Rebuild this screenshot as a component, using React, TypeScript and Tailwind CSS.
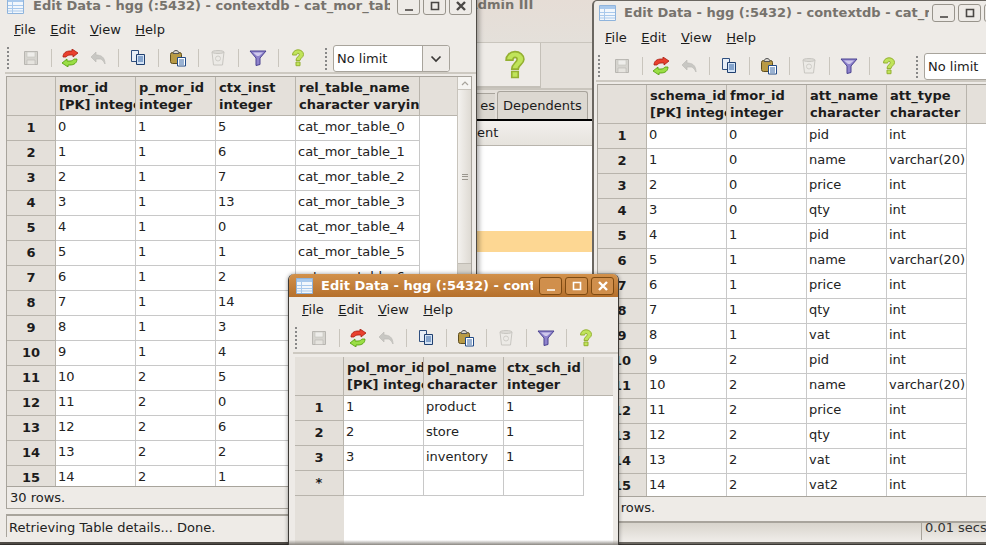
const font = 'font-["DejaVu_Sans",sans-serif]'

function Icon({ kind }: { kind: string }) {
  if (kind === 'save') {
    return (
      <svg width="16" height="16" viewBox="0 0 16 16">
        <path d="M1.500 1.500h13v13h-13z" fill="#d6d4cf" stroke="#b8b6b1" />
        <path d="M4 2h8v5H4z" fill="#eeedea" stroke="#c4c2bd" strokeWidth=".6" />
        <path d="M4 10h8v4.500H4z" fill="#e6e4df" stroke="#b8b6b1" strokeWidth=".6" />
      </svg>
    )
  }
  if (kind === 'refresh') {
    return (
      <svg width="18" height="18" viewBox="0 0 18 18">
        <path d="M2 8C2 4 5 2 9 2h2V0l6 4-5 4V6H9C7 6 6 7 5 8z" fill="#e9402e" stroke="#a61c10" strokeWidth=".8" />
        <path d="M16 10c0 4-3 6-7 6H7v2l-6-4 5-4v2h3c2 0 3-1 4-2z" fill="#9ade45" stroke="#4e9a06" strokeWidth=".8" />
      </svg>
    )
  }
  if (kind === 'undo') {
    return (
      <svg width="16" height="16" viewBox="0 0 16 16">
        <path d="M1 7l5-5v3c5 0 9 2 9 9-2-4-4-5-5-5H6v3z" fill="#c8c7c3" stroke="#bdbcb8" strokeWidth=".7" />
      </svg>
    )
  }
  if (kind === 'copy') {
    return (
      <svg width="16" height="17" viewBox="0 0 16 17">
        <path d="M1.500 1.500h7v11h-7z" fill="#e8eef6" stroke="#2f4f7f" />
        <path d="M6.500 5.500h8v10h-8z" fill="#d4e3f5" stroke="#1f3f6f" />
        <path d="M8 8h5M8 10h5M8 12h5" stroke="#3465a4" />
      </svg>
    )
  }
  if (kind === 'paste') {
    return (
      <svg width="18" height="18" viewBox="0 0 18 18">
        <rect x="1.500" y="3.500" width="11" height="11" rx="2" fill="#b89a45" stroke="#5f4e1e" />
        <path d="M4 4.500c0-2 1.500-3 3-3s3 1 3 3z" fill="#d8d6d0" stroke="#555" />
        <path d="M8.500 8.500h8v8.500h-8z" fill="#fff" stroke="#204a87" />
        <path d="M10 11h5M10 13h5M10 15h5" stroke="#3465a4" />
      </svg>
    )
  }
  if (kind === 'trash') {
    return (
      <svg width="16" height="17" viewBox="0 0 16 17">
        <path d="M2 3h12l-1.500 13h-9z" fill="#eceae6" stroke="#c8c6c1" />
        <ellipse cx="8" cy="3" rx="6" ry="1.500" fill="#dddbd6" stroke="#c8c6c1" />
        <circle cx="8" cy="9.500" r="2.500" fill="none" stroke="#cfcdc8" />
      </svg>
    )
  }
  if (kind === 'filter') {
    return (
      <svg width="18" height="16" viewBox="0 0 18 16">
        <path d="M1 1h16l-6 7v6.500l-4 1V8z" fill="#8e82cc" stroke="#4a4290" />
        <path d="M4 2.500h10L10 6H8z" fill="#cfc9ec" />
      </svg>
    )
  }
  return <HelpMark width={16} height={18} />
}

function HelpMark({ width, height }: { width: number; height: number }) {
  return (
    <svg width={width} height={height} viewBox="0 0 16 18">
      <path d="M2.500 6C2.500 3 5 .8 8 .8s5.500 2 5.500 4.700c0 3-3.500 3.500-3.500 6H6c0-3.500 3.300-4 3.300-6 0-.8-.5-1.200-1.300-1.200s-1.300.6-1.300 1.700z" fill="#c0e45a" stroke="#94b032" />
      <path d="M6 13h4v3.700H6z" fill="#c0e45a" stroke="#94b032" />
    </svg>
  )
}

function Sep() {
  return <div className="w-px h-[18px] bg-[#c9c5bd] ml-[10px] mr-[9px]" />
}

function Grip() {
  return <div className="w-[5px] h-[22px] border-l-2 border-dotted border-[#888]" />
}

function Toolbar() {
  return (
    <div className="flex items-center h-[31px] shrink-0 bg-[#eeebe7] border-b-2 border-[#cdc9c1]">
      <div className="ml-[2px] mr-[9px]"><Grip /></div>
      <div className="w-[20px] flex justify-center"><Icon kind="save" /></div>
      <Sep />
      <div className="w-[20px] -ml-[1px] flex justify-center"><Icon kind="refresh" /></div>
      <div className="w-[20px] ml-[8px] flex justify-center"><Icon kind="undo" /></div>
      <Sep />
      <div className="w-[20px] flex justify-center"><Icon kind="copy" /></div>
      <Sep />
      <div className="w-[20px] flex justify-center"><Icon kind="paste" /></div>
      <Sep />
      <div className="w-[20px] flex justify-center"><Icon kind="trash" /></div>
      <Sep />
      <div className="w-[20px] flex justify-center"><Icon kind="filter" /></div>
      <Sep />
      <div className="w-[20px] flex justify-center"><Icon kind="help" /></div>
    </div>
  )
}

function Combo() {
  return (
    <div className="flex-1 h-[31px] pt-[2px] flex items-center bg-[#eeebe7] border-b-2 border-[#cdc9c1]">
      <div className="ml-[4px] mr-[3px]"><Grip /></div>
      <div className="w-[117px] h-[27px] shrink-0 flex bg-white border border-[#a8a49c] rounded-[3px] text-[13px] text-[#1c1c1c]">
        <div className="w-[88px] pl-[3px] leading-[25px]">No limit</div>
        <div className="flex-1 bg-[#eeebe7] border-l border-[#a8a49c] rounded-r-[3px] flex items-center justify-center">
          <svg width="12" height="8" viewBox="0 0 12 8" fill="none" stroke="#3c3a38" strokeWidth="1.700">
            <path d="M1.500 1.500L6 6l4.500-4.500" />
          </svg>
        </div>
      </div>
    </div>
  )
}

function WinButton({ kind, active }: { kind: string; active?: boolean }) {
  const color = active ? '#fff' : '#4a4744'
  return (
    <div className={active
      ? 'w-[23px] h-[18px] shrink-0 rounded-[3px] border border-[#7d4a12] bg-[#d08f4c] flex items-center justify-center'
      : 'w-[23px] h-[18px] shrink-0 rounded-[3px] border border-[#98948c] bg-[#eeebe7] flex items-center justify-center'}>
      <svg width="12" height="12" viewBox="0 0 12 12" fill="none" stroke={color} strokeWidth={kind === 'close' ? 2.400 : 1.600}>
        {kind === 'min' && <path d="M2 10h8" />}
        {kind === 'max' && <path d="M2.500 2.500h7v7h-7z" />}
        {kind === 'close' && <path d="M2 2l8 8M10 2l-8 8" />}
      </svg>
    </div>
  )
}

function TitleIcon() {
  return (
    <svg width="17" height="16" viewBox="0 0 17 16" className="shrink-0">
      <path d="M.500.500h16v15H.500z" fill="#f2f7fc" stroke="#8fb4dc" />
      <path d="M1 1h15v3H1z" fill="#a9c9ec" />
      <path d="M5.500 1v14M1 7.500h15M1 10.500h15M1 13h15" stroke="#a9c9ec" />
    </svg>
  )
}

function Menu({ className }: { className: string }) {
  return (
    <div className={`flex items-center h-[26px] shrink-0 gap-[14.500px] text-[13px] text-[#1c1c1c] bg-[#eeebe7] ${className}`}>
      <span><u>F</u>ile</span>
      <span><u>E</u>dit</span>
      <span><u>V</u>iew</span>
      <span><u>H</u>elp</span>
    </div>
  )
}

type TableProps = {
  cols: { w: number; a: string; b: string }[]
  rows: (string | number)[][]
}

function Table({ cols, rows }: TableProps) {
  return (
    <div className="flex-1 min-w-0 overflow-hidden bg-white">
      <div className="flex h-[39px] bg-[#e4e0da] border-b border-[#b8b4ac]">
        <div className="w-[49px] shrink-0 border-r border-[#b8b4ac]" />
        {cols.map((c) => (
          <div key={c.a} style={{ width: c.w }} className="shrink-0 pl-[3px] pt-[2px] overflow-hidden whitespace-nowrap border-r border-[#b8b4ac] font-bold text-[13px] leading-[17px] text-[#1c1c1c]">
            <div>{c.a}</div>
            <div>{c.b}</div>
          </div>
        ))}
      </div>
      {rows.map((r, i) => (
        <div key={i} className="flex h-[25px]">
          <div className="w-[49px] shrink-0 bg-[#e4e0da] border-r border-b border-[#b8b4ac] flex items-center justify-center font-bold text-[13px] text-[#1c1c1c]">
            {r[0]}
          </div>
          {cols.map((c, j) => (
            <div key={c.a} style={{ width: c.w }} className="shrink-0 pl-[2px] leading-[22px] border-r border-b border-[#c8c8c8] text-[13px] text-[#222] whitespace-nowrap overflow-hidden">
              {r[j + 1]}
            </div>
          ))}
        </div>
      ))}
    </div>
  )
}

function Scrollbar() {
  return (
    <div className="w-[14px] shrink-0 flex flex-col bg-[#d8d4cc] border-l border-[#c8c4bc]">
      <div className="h-[13px] shrink-0 bg-[#f6f5f2] border-b border-[#c8c4bc] flex items-center justify-center">
        <svg width="8" height="5" viewBox="0 0 8 5" fill="none" stroke="#a8a49c" strokeWidth="1.200">
          <path d="M1 4l3-3 3 3" />
        </svg>
      </div>
      <div className="h-[174px] shrink-0 bg-gradient-to-r from-[#f4f2ef] to-[#dedad3] border-b border-[#c0bcb4] flex items-center justify-center">
        <div className="w-[6px] h-[6px] border-y border-[#9a968e] flex items-center">
          <div className="w-full h-px bg-[#9a968e]" />
        </div>
      </div>
    </div>
  )
}

const leftRows = [
  [0, 1, 5], [1, 1, 6], [2, 1, 7], [3, 1, 13], [4, 1, 0], [5, 1, 1], [6, 1, 2], [7, 1, 14],
  [8, 1, 3], [9, 1, 4], [10, 2, 5], [11, 2, 0], [12, 2, 6], [13, 2, 2], [14, 2, 1],
].map((r, i) => [i + 1, r[0], r[1], r[2], i < 8 ? 'cat_mor_table_' + i : ''])

const rightData: [number, string, string][] = [
  [0, 'pid', 'int'], [0, 'name', 'varchar(20)'], [0, 'price', 'int'], [0, 'qty', 'int'],
  [1, 'pid', 'int'], [1, 'name', 'varchar(20)'], [1, 'price', 'int'], [1, 'qty', 'int'], [1, 'vat', 'int'],
  [2, 'pid', 'int'], [2, 'name', 'varchar(20)'], [2, 'price', 'int'], [2, 'qty', 'int'], [2, 'vat', 'int'], [2, 'vat2', 'int'],
]
const rightRows = rightData.map((r, i) => [i + 1, i, r[0], r[1], r[2]])

const midRows = [
  [1, 1, 'product', 1],
  [2, 2, 'store', 1],
  [3, 3, 'inventory', 1],
  ['*', '', '', ''],
]

function Background() {
  return (
    <div className={`absolute left-[440px] top-0 w-[160px] h-[280px] bg-[#e4e0da] flex flex-col text-[13px] text-[#1c1c1c] ${font}`}>
      <div className="h-[43px] shrink-0 pl-[9px] leading-[10px] font-bold text-[#77736d] whitespace-nowrap bg-gradient-to-b from-[#e6ddd6] to-[#e4e0da] border-b border-[#c9c5bd]">pgAdmin III</div>
      <div className="h-[47px] shrink-0 flex border-b-2 border-[#c9c5bd]">
        <div className="w-[64px] ml-[37px] bg-[#eeebe7] border-r border-b-2 border-[#c4c0b8] flex items-center justify-end pr-[12px]">
          <HelpMark width={26} height={30} />
        </div>
      </div>
      <div className="h-[31px] shrink-0 flex items-end pl-[37px] border-b-2 border-black">
        <div className="w-[18px] h-[26px] mr-[2px] text-right leading-[24px] bg-[#dcd8d1] border-t border-[#a8a49c]">es</div>
        <div className="h-[28px] w-[91px] shrink-0 px-[5px] leading-[28px] bg-[#dcd8d1] border border-b-0 border-[#a8a49c] rounded-t-[3px]">Dependents</div>
      </div>
      <div className="h-[25px] shrink-0 bg-gradient-to-b from-[#f2f0ed] to-[#e6e3dd] border-b border-[#b8b4ac] pl-[37px] leading-[24px] overflow-hidden">ent</div>
      <div className="flex-1 bg-white flex flex-col">
        <div className="h-[85px]" />
        <div className="h-[21px] bg-[#fdd793]" />
      </div>
    </div>
  )
}

export default function App() {
  return (
    <div className={`relative w-[986px] h-[545px] overflow-hidden bg-[#3a3733] ${font}`}>
      <Background />

      {/* left window */}
      <div className="absolute left-[-1px] top-[-5px] w-[478px] h-[549px] flex flex-col bg-[#eeebe7] border-x border-b-2 border-[#4f4b46] shadow-[2px_0_5px_rgba(0,0,0,0.35)]">
        <div className="flex items-center h-[22px] shrink-0 pl-[7px] bg-[#eeebe7] text-[13px] font-bold text-[#77736d]">
          <TitleIcon />
          <span className="w-[357px] ml-[9px] mr-[7px] shrink-0 overflow-hidden whitespace-nowrap">Edit Data - hgg (:5432) - contextdb - cat_mor_table_0</span>
          <div className="flex gap-[3px]"><WinButton kind="min" /><WinButton kind="max" /><WinButton kind="close" /></div>
        </div>
        <Menu className="pl-[14px]" />
        <div className="flex shrink-0">
          <div className="w-[316px] shrink-0 ml-[5px]"><Toolbar /></div>
          <Combo />
        </div>
        <div className="flex-1 min-h-0 flex flex-col pl-[6px] pr-[4px] pt-[2px] pb-[5px]">
          <div className="flex-1 min-h-0 flex border border-[#a8a49c]">
            <Table
              rows={leftRows}
              cols={[
                { w: 80, a: 'mor_id', b: '[PK] integer' },
                { w: 80, a: 'p_mor_id', b: 'integer' },
                { w: 80, a: 'ctx_inst', b: 'integer' },
                { w: 124, a: 'rel_table_name', b: 'character varying' },
              ]}
            />
            <Scrollbar />
          </div>
          <div className="h-[22px] shrink-0 border border-t-0 border-[#a8a49c] pl-[3px] text-[13px] leading-[22px] text-[#222]">30 rows.</div>
          <div className="h-[5px] shrink-0" />
          <div className="h-[23px] shrink-0 border-t-2 border-l border-[#a8a49c] pl-[2px] text-[13px] leading-[23px] text-[#222]">Retrieving Table details... Done.</div>
        </div>
      </div>

      {/* right window */}
      <div className="absolute left-[592px] top-0 w-[450px] h-[544px] flex flex-col bg-[#eeebe7] border-l-2 border-t border-b-2 border-[#6b6761] rounded-tl-[5px]">
        <div className="flex items-center h-[24px] shrink-0 pl-[5px] text-[13px] font-bold text-[#77736d]">
          <TitleIcon />
          <span className="w-[305px] ml-[8px] mr-[3px] shrink-0 overflow-hidden whitespace-nowrap">Edit Data - hgg (:5432) - contextdb - cat_mor_table</span>
          <div className="flex gap-[3px]"><WinButton kind="min" /><WinButton kind="max" /><WinButton kind="close" /></div>
        </div>
        <Menu className="pl-[11px]" />
        <div className="flex shrink-0 ml-[2px]">
          <div className="w-[316px] shrink-0"><Toolbar /></div>
          <Combo />
        </div>
        <div className="flex-1 min-h-0 flex flex-col pl-[3px] pt-[2px] pb-[2px]">
          <div className="flex-1 min-h-0 flex border border-[#a8a49c]">
            <Table
              rows={rightRows}
              cols={[
                { w: 80, a: 'schema_id', b: '[PK] integer' },
                { w: 80, a: 'fmor_id', b: 'integer' },
                { w: 80, a: 'att_name', b: 'character' },
                { w: 80, a: 'att_type', b: 'character' },
              ]}
            />
          </div>
          <div className="h-[26px] shrink-0 border-b-2 border-[#a8a49c] pl-[3px] text-[13px] leading-[22px] text-[#222]">18 rows.</div>
          <div className="h-[17px] shrink-0 pl-[324px] text-[13px] text-[#333] whitespace-nowrap bg-gradient-to-b from-[#d8d4cc] to-[#eeebe7]">
            <div className="pl-[3px] h-full border-l border-[#a8a49c] leading-[10px]">0.01 secs</div>
          </div>
        </div>
      </div>

      {/* center window */}
      <div className="absolute left-[288px] top-[274px] w-[331px] h-[290px] flex flex-col bg-[#eeebe7] border-x border-[#3d3a36] rounded-t-[6px] overflow-hidden shadow-[0_0_4px_rgba(0,0,0,0.4)]">
        <div className="flex items-center h-[23px] shrink-0 pl-[7px] bg-gradient-to-b from-[#d2914b] to-[#b5702c] text-[13px] font-bold text-white">
          <TitleIcon />
          <span className="w-[212px] ml-[8px] mr-[6px] shrink-0 overflow-hidden whitespace-nowrap">Edit Data - hgg (:5432) - contextdb</span>
          <div className="flex gap-[3px]"><WinButton kind="min" active /><WinButton kind="max" active /><WinButton kind="close" active /></div>
        </div>
        <Menu className="pl-[13px]" />
        <div className="ml-[4px] shrink-0"><Toolbar /></div>
        <div className="flex-1 min-h-0 flex flex-col pl-[6px] pr-[5px] pt-[3px]">
          <div className="flex-1 relative bg-white">
            <div className="absolute left-0 top-0 bottom-0 w-[49px] bg-[#e4e0da]" />
            <div className="relative">
              <Table
                rows={midRows}
                cols={[
                  { w: 80, a: 'pol_mor_id', b: '[PK] integer' },
                  { w: 80, a: 'pol_name', b: 'character' },
                  { w: 80, a: 'ctx_sch_id', b: 'integer' },
                ]}
              />
            </div>
          </div>
        </div>
        <div className="absolute left-0 right-0 top-[266px] h-[5px] bg-gradient-to-b from-transparent to-[#8a8680]" />
      </div>
    </div>
  )
}
